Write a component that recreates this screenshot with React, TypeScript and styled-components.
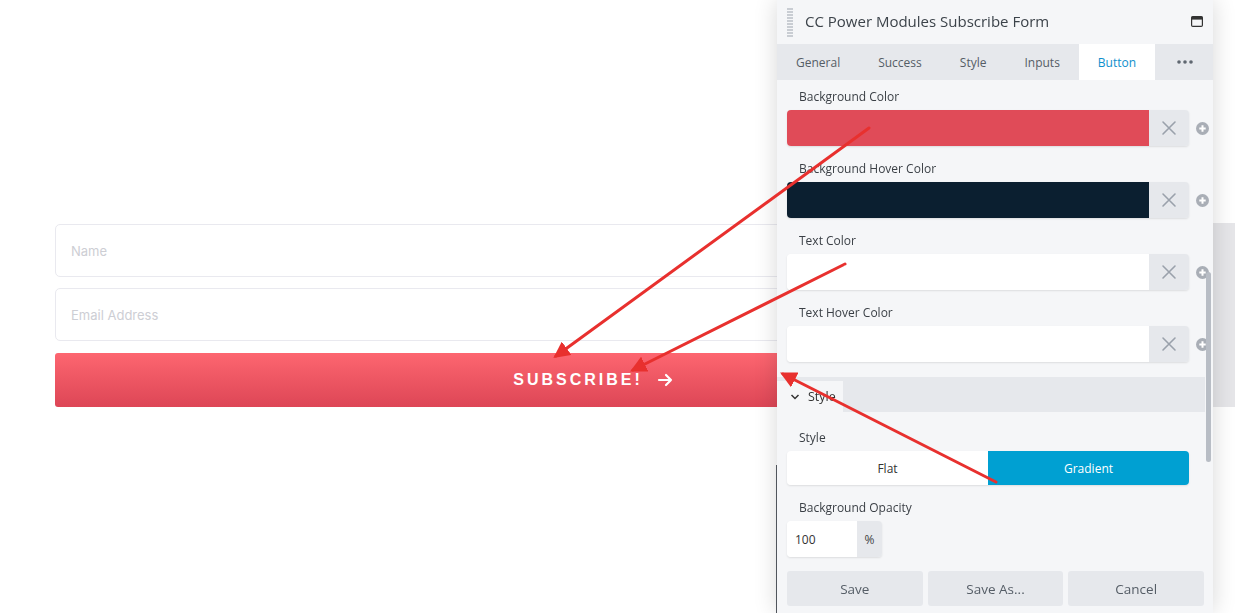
import React from "react";
import styled, { createGlobalStyle } from "styled-components";

const colors = {
    panel: "#f5f6f8",
    band: "#e6e8ec",
    text: "#3c434a",
    muted: "#9aa1ab",
    blue: "#00a0d2",
    tabBlue: "#0e8fcc",
    red: "#e8302e",
};

interface ColorField {
    label: string;
    swatch: string;
}

const fields: ColorField[] = [
    { label: "Background Color", swatch: "#e04b58" },
    { label: "Background Hover Color", swatch: "#0b1f30" },
    { label: "Text Color", swatch: "#ffffff" },
    { label: "Text Hover Color", swatch: "#ffffff" },
];

const tabs = ["General", "Success", "Style", "Inputs", "Button"];

const GlobalStyle = createGlobalStyle`
    html, body {
        margin: 0;
        background: #ffffff;
        overflow: hidden;
    }
    * {
        box-sizing: border-box;
    }
`;

export default function App() {
    return (
        <>
            <GlobalStyle />
            <Page>
                <ModuleRow>
                    <Form>
                        <TextInput placeholder="Name" />
                        <TextInput placeholder="Email Address" />
                        <SubscribeButton>
                            SUBSCRIBE!
                            <svg width="16" height="16" viewBox="0 0 16 16" fill="none" stroke="#fff" strokeWidth="2.2" strokeLinecap="round" strokeLinejoin="round">
                                <path d="M2 8h12M9 3l5 5-5 5" />
                            </svg>
                        </SubscribeButton>
                    </Form>
                    <Highlight />
                </ModuleRow>
            </Page>
            <SettingsPanel />
            <Arrows />
        </>
    );
}

const SettingsPanel: React.FC = () => {
    return (
        <Panel>
            <Header>
                <Handle />
                <Title>CC Power Modules Subscribe Form</Title>
                <WindowIcon />
            </Header>
            <Tabs>
                {tabs.map((t) => (
                    <Tab key={t} active={t === "Button"}>
                        {t}
                    </Tab>
                ))}
                <More>
                    <svg width="16" height="4" viewBox="0 0 16 4" fill="#5f6770">
                        <circle cx="2" cy="2" r="1.8" />
                        <circle cx="8" cy="2" r="1.8" />
                        <circle cx="14" cy="2" r="1.8" />
                    </svg>
                </More>
            </Tabs>
            <Body>
                <Section>
                    {fields.map((f) => (
                        <FieldBlock key={f.label}>
                            <Label>{f.label}</Label>
                            <FieldRow>
                                <ColorBox>
                                    <Swatch color={f.swatch} />
                                    <ClearButton>
                                        <svg width="16" height="16" viewBox="0 0 16 16" stroke={colors.muted} strokeWidth="1.6" strokeLinecap="round">
                                            <path d="M2 2l12 12M14 2L2 14" />
                                        </svg>
                                    </ClearButton>
                                </ColorBox>
                                <PlusIcon />
                            </FieldRow>
                        </FieldBlock>
                    ))}
                </Section>
                <SectionHeader>
                    <SectionTab>
                        <svg width="10" height="10" viewBox="0 0 10 10" fill="none" stroke="#333" strokeWidth="1.5">
                            <path d="M1.5 3l3.5 3.5L8.5 3" />
                        </svg>
                        Style
                    </SectionTab>
                </SectionHeader>
                <Section>
                    <FieldBlock>
                        <Label>Style</Label>
                        <Toggle>
                            <ToggleOption>Flat</ToggleOption>
                            <ToggleOption active>Gradient</ToggleOption>
                        </Toggle>
                    </FieldBlock>
                    <FieldBlock>
                        <Label>Background Opacity</Label>
                        <UnitInput>
                            <UnitValue>100</UnitValue>
                            <Unit>%</Unit>
                        </UnitInput>
                    </FieldBlock>
                </Section>
            </Body>
            <Footer>
                <FooterButton>Save</FooterButton>
                <FooterButton>Save As...</FooterButton>
                <FooterButton>Cancel</FooterButton>
            </Footer>
            <Scrollbar />
        </Panel>
    );
};

const PlusIcon: React.FC = () => (
    <svg width="13" height="13" viewBox="0 0 13 13" style={{ flexShrink: 0 }}>
        <circle cx="6.5" cy="6.5" r="6.5" fill="#a9aeb6" />
        <path d="M6.5 3.3v6.4M3.3 6.5h6.4" stroke="#fff" strokeWidth="2" />
    </svg>
);

const WindowIcon: React.FC = () => (
    <svg width="12" height="11" viewBox="0 0 12 11" style={{ marginLeft: "auto" }}>
        <rect x="0.6" y="0.6" width="10.8" height="9.8" rx="1.2" fill="none" stroke="#333" strokeWidth="1.2" />
        <rect x="0.6" y="0.6" width="10.8" height="3" fill="#333" />
    </svg>
);

const Arrows: React.FC = () => (
    <Overlay width="1235" height="613" viewBox="0 0 1235 613">
        <defs>
            <marker id="head" viewBox="0 0 10 10" refX="8" refY="5" markerWidth="5.5" markerHeight="5.5" orient="auto">
                <path d="M0 0L10 5L0 10z" fill={colors.red} />
            </marker>
        </defs>
        <g stroke={colors.red} strokeWidth="3" strokeLinecap="round" markerEnd="url(#head)">
            <line x1="869" y1="128" x2="556" y2="356" />
            <line x1="845" y1="264" x2="633" y2="370" />
            <line x1="996" y1="482" x2="783" y2="374" />
        </g>
    </Overlay>
);

const Page = styled.div`
    height: 613px;
    padding-top: 224px;
    padding-left: 55px;
    font-family: Inter, "Liberation Sans", sans-serif;
`;

const ModuleRow = styled.div`
    display: flex;
    align-items: stretch;
`;

const Form = styled.div`
    width: 1076px;
    display: flex;
    flex-direction: column;
    gap: 11px;
`;

const Highlight = styled.div`
    flex: 1;
    margin-left: 82px;
    margin-top: -1px;
    background: #e6e6e9;
`;

const TextInput = styled.input`
    height: 53px;
    border: 1px solid #e9e9ef;
    border-radius: 5px;
    padding: 0 15px;
    font-family: Inter, "Liberation Sans", sans-serif;
    font-size: 13px;
    outline: none;

    &::placeholder {
        color: #cdced4;
    }
`;

const SubscribeButton = styled.div`
    height: 54px;
    margin-top: 1px;
    border-radius: 3px;
    background: linear-gradient(#fd6670, #dd4656);
    color: #ffffff;
    display: flex;
    align-items: center;
    justify-content: center;
    gap: 14px;
    font-family: "Liberation Sans", sans-serif;
    font-weight: 700;
    font-size: 16px;
    letter-spacing: 3px;
`;

const Panel = styled.div`
    position: fixed;
    top: 0;
    left: 777px;
    width: 436px;
    height: 613px;
    background: ${colors.panel};
    box-shadow: 0 0 22px rgba(0, 0, 0, 0.16);
    display: flex;
    flex-direction: column;
    font-family: "Open Sans", "Noto Sans", sans-serif;
    color: ${colors.text};

    &::before {
        content: "";
        position: absolute;
        left: -1px;
        top: 465px;
        bottom: 0;
        width: 1px;
        background: #50555c;
    }
`;

const Header = styled.div`
    height: 44px;
    display: flex;
    align-items: center;
    padding: 0 10px 2px 10px;
`;

const Handle = styled.div`
    width: 6px;
    height: 29px;
    margin-top: 2px;
    background: repeating-linear-gradient(#c9cdd3 0 2px, transparent 2px 3px);
`;

const Title = styled.div`
    margin-left: 12px;
    font-size: 15px;
    color: #3c434a;
`;

const Tabs = styled.div`
    height: 36px;
    display: flex;
    background: ${colors.band};
`;

const Tab = styled.div<{ active?: boolean }>`
    padding: 0 19px;
    display: flex;
    align-items: center;
    font-size: 12px;
    color: ${(p) => (p.active ? colors.tabBlue : "#555d66")};
    background: ${(p) => (p.active ? "#ffffff" : "transparent")};
`;

const More = styled.div`
    margin-left: 22px;
    display: flex;
    align-items: center;
`;

const Body = styled.div`
    flex: 1;
    display: flex;
    flex-direction: column;
    padding-top: 8px;
`;

const Section = styled.div`
    padding: 0 5px 0 10px;
    display: flex;
    flex-direction: column;
`;

const FieldBlock = styled.div`
    display: flex;
    flex-direction: column;
    margin-bottom: 14px;
`;

const Label = styled.div`
    height: 18px;
    line-height: 18px;
    padding-left: 12px;
    margin-bottom: 4px;
    font-size: 12px;
    color: #3a3f45;
`;

const FieldRow = styled.div`
    display: flex;
    align-items: center;
    gap: 7px;
`;

const ColorBox = styled.div`
    width: 402px;
    flex-shrink: 0;
    height: 36px;
    display: flex;
    border-radius: 4px;
    overflow: hidden;
    box-shadow: 0 1px 2px rgba(0, 0, 0, 0.1);
`;

const Swatch = styled.div<{ color: string }>`
    flex: 1;
    background: ${(p) => p.color};
`;

const ClearButton = styled.div`
    width: 40px;
    display: flex;
    align-items: center;
    justify-content: center;
    background: ${colors.band};
`;

const SectionHeader = styled.div`
    height: 35px;
    margin: 1px 8px 17px 0;
    background: ${colors.band};
    display: flex;
    align-items: flex-end;
`;

const SectionTab = styled.div`
    width: 66px;
    height: 31px;
    background: ${colors.panel};
    display: flex;
    align-items: center;
    gap: 8px;
    padding-left: 13px;
    font-size: 12.5px;
    color: #333;
`;

const Toggle = styled.div`
    width: 402px;
    height: 34px;
    display: flex;
    border-radius: 4px;
    overflow: hidden;
    box-shadow: 0 1px 2px rgba(0, 0, 0, 0.1);
`;

const ToggleOption = styled.div<{ active?: boolean }>`
    flex: 1;
    display: flex;
    align-items: center;
    justify-content: center;
    font-size: 12px;
    background: ${(p) => (p.active ? colors.blue : "#ffffff")};
    color: ${(p) => (p.active ? "#ffffff" : "#333")};
`;

const UnitInput = styled.div`
    width: 95px;
    height: 36px;
    display: flex;
    border-radius: 4px;
    overflow: hidden;
    box-shadow: 0 1px 2px rgba(0, 0, 0, 0.1);
`;

const UnitValue = styled.div`
    width: 70px;
    background: #ffffff;
    display: flex;
    align-items: center;
    padding-left: 8px;
    font-size: 12px;
    color: #333;
`;

const Unit = styled.div`
    flex: 1;
    background: ${colors.band};
    display: flex;
    align-items: center;
    justify-content: center;
    font-size: 12px;
    color: #444;
`;

const Footer = styled.div`
    display: flex;
    gap: 5px;
    padding: 0 9px 7px 10px;
`;

const FooterButton = styled.div`
    flex: 1;
    height: 35px;
    border-radius: 3px;
    background: ${colors.band};
    display: flex;
    align-items: center;
    justify-content: center;
    font-size: 13.5px;
    color: #555d66;
`;

const Scrollbar = styled.div`
    position: absolute;
    right: 2px;
    top: 272px;
    width: 5px;
    height: 190px;
    border-radius: 3px;
    background: #b8bdc5;
`;

const Overlay = styled.svg`
    position: fixed;
    top: 0;
    left: 0;
    pointer-events: none;
`;
